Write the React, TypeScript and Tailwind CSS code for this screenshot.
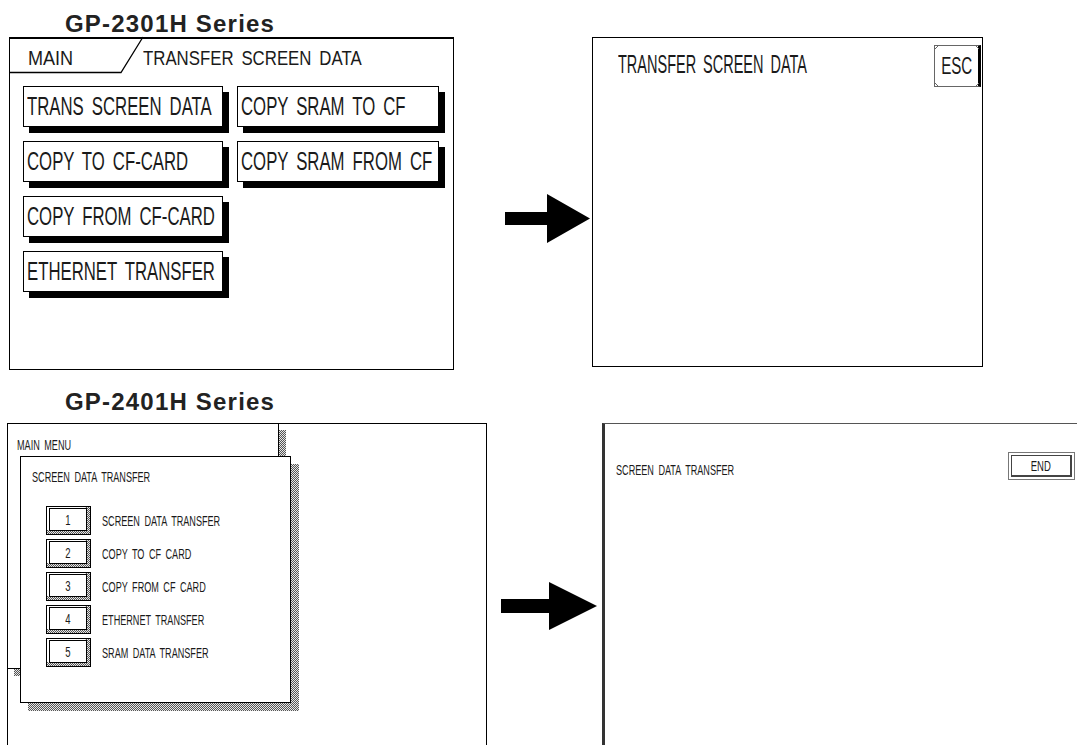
const lcd = "font-['Liberation_Sans',Arial,sans-serif] text-[#1a1a1a]";
const dither = "bg-[repeating-conic-gradient(#555_0_25%,#e5e5e5_0_50%)] bg-[length:2px_2px]";

function Arrow({ w, h, points }: { w: number; h: number; points: string }) {
  return (
    <svg width={w} height={h} viewBox={`0 0 ${w} ${h}`} className="block">
      <polygon points={points} fill="#000" />
    </svg>
  );
}

function BigButton({ label }: { label: string }) {
  return (
    <div className="h-[41px] border border-black bg-white shadow-[6px_6px_0_0_#000] flex items-center pl-[3px]">
      <span className="inline-block origin-left scale-x-[0.67] [word-spacing:5px] whitespace-nowrap text-[25px] leading-none">
        {label}
      </span>
    </div>
  );
}

function NumButton({ n, label }: { n: string; label: string }) {
  return (
    <div className="flex items-center gap-[11px]">
      <div className={`w-[45px] h-[29px] border border-black flex ${dither}`}>
        <div className="ml-[2px] mt-[1px] mr-[3px] mb-[3px] flex-1 border border-black bg-white shadow-[-2px_-1px_0_0_#fff] flex items-center justify-center">
          <span className="inline-block scale-x-[0.68] text-[14px] leading-none">{n}</span>
        </div>
      </div>
      <span className="inline-block origin-left scale-x-[0.65] [word-spacing:3px] whitespace-nowrap text-[14px] leading-none">
        {label}
      </span>
    </div>
  );
}

const bigButtons = [
  "TRANS SCREEN DATA",
  "COPY SRAM TO CF",
  "COPY TO CF-CARD",
  "COPY SRAM FROM CF",
  "COPY FROM CF-CARD",
  "",
  "ETHERNET TRANSFER",
];

const menuRows = [
  ["1", "SCREEN DATA TRANSFER"],
  ["2", "COPY TO CF CARD"],
  ["3", "COPY FROM CF CARD"],
  ["4", "ETHERNET TRANSFER"],
  ["5", "SRAM DATA TRANSFER"],
];

export default function App() {
  const title = "font-['Liberation_Sans',Arial,sans-serif] font-bold text-[24px] leading-none tracking-[1.2px] text-[#222]";

  return (
    <div className={`w-[1077px] h-[745px] overflow-hidden bg-white ${lcd}`}>
      {/* GP-2301H */}
      <div className="flex items-start h-[375px]">
        <div className="flex flex-col pl-[9px] w-[454px] shrink-0">
          <div className="h-[37px] pt-[12px] pl-[56px]">
            <span className={title}>GP-2301H Series</span>
          </div>
          <div className="w-[445px] h-[333px] border border-black border-t-2 bg-white">
            <div className="relative h-[34px]">
              <svg width="140" height="36" viewBox="0 0 140 36" className="absolute left-0 top-0 overflow-visible">
                <polyline points="-1,33.5 111,33.5 133,-2" fill="none" stroke="#000" strokeWidth="1.3" />
              </svg>
              <div className="flex pt-[8px] text-[21px] leading-none">
                <span className="ml-[18px] w-[115px] shrink-0">
                  <span className="inline-block origin-left scale-x-[0.86]">MAIN</span>
                </span>
                <span className="inline-block origin-left scale-x-[0.8] [word-spacing:4px] whitespace-nowrap">
                  TRANSFER SCREEN DATA
                </span>
              </div>
            </div>
            <div className="grid grid-cols-[200px_202px] gap-x-[14px] gap-y-[14px] mt-[13px] pl-[13px]">
              {bigButtons.map((b, i) => (b ? <BigButton key={i} label={b} /> : <div key={i} />))}
            </div>
          </div>
        </div>

        <div className="ml-[51px] mt-[194px] shrink-0">
          <Arrow w={85} h={49} points="0,18 42,18 42,0 85,24.5 42,49 42,31 0,31" />
        </div>

        <div className="ml-[2px] mt-[37px] w-[391px] h-[330px] border border-black shrink-0 flex items-start justify-between">
          <span className="ml-[25px] mt-[14px] w-[280px] shrink-0 inline-block origin-left scale-x-[0.58] [word-spacing:5px] whitespace-nowrap text-[25px] leading-none">
            TRANSFER SCREEN DATA
          </span>
          <div className="relative mt-[7px] mr-[1px] w-[47px] h-[42px] shrink-0 border border-[#666] border-r-[3px] border-r-black flex items-center justify-center">
            <svg width="44" height="40" viewBox="0 0 44 40" className="absolute left-0 top-0">
              <path d="M0 3 L3 0 M0 37 L3 40 M41 0 L44 3 M41 40 L44 37" stroke="#666" strokeWidth="1" fill="none" />
            </svg>
            <span className="inline-block scale-x-[0.63] text-[24px] leading-none">ESC</span>
          </div>
        </div>
      </div>

      {/* GP-2401H */}
      <div className="h-[48px] pt-[15px] pl-[65px]">
        <span className={title}>GP-2401H Series</span>
      </div>
      <div className="flex items-start">
        <div className="ml-[7px] w-[480px] h-[330px] border border-black relative shrink-0">
          <div className="absolute left-[-1px] top-[-1px] w-[279px] h-[253px]">
            <div className={`absolute left-[7px] top-[7px] w-[272px] h-[246px] ${dither}`} />
            <div className="absolute left-0 top-0 w-[272px] h-[246px] border border-black bg-white pl-[9px] pt-[9px]">
              <span className="inline-block origin-left scale-x-[0.65] [word-spacing:3px] whitespace-nowrap text-[14px] leading-none">
                MAIN MENU
              </span>
            </div>
          </div>
          <div className="absolute left-[12px] top-[32px] w-[279px] h-[255px]">
            <div className={`absolute left-[8px] top-[8px] w-[271px] h-[247px] ${dither}`} />
            <div className="absolute left-0 top-0 w-[271px] h-[247px] border border-black bg-white pl-[11px] pt-[8px]">
              <span className="inline-block origin-left scale-x-[0.65] [word-spacing:3px] whitespace-nowrap text-[14px] leading-none">
                SCREEN DATA TRANSFER
              </span>
              <div className="flex flex-col gap-[4px] mt-[17px] pl-[14px]">
                {menuRows.map(([n, l]) => (
                  <NumButton key={n} n={n} label={l} />
                ))}
              </div>
            </div>
          </div>
        </div>

        <div className="ml-[14px] mt-[159px] shrink-0">
          <Arrow w={96} h={48} points="0,17 48,17 48,0 96,24 48,48 48,31 0,31" />
        </div>

        <div className="ml-[5px] w-[490px] h-[330px] border border-[#555] border-l-[3px] border-l-[#333] shrink-0 flex items-start">
          <span className="ml-[11px] w-[392px] mt-[39px] shrink-0 inline-block origin-left scale-x-[0.65] [word-spacing:3px] whitespace-nowrap text-[14px] leading-none">
            SCREEN DATA TRANSFER
          </span>
          <div className="mt-[28px] w-[67px] h-[28px] border border-[#777] p-[2px] shrink-0">
            <div className="h-full border border-[#444] border-r-2 border-b-2 flex items-center justify-center">
              <span className="inline-block scale-x-[0.68] text-[14px] leading-none">END</span>
            </div>
          </div>
        </div>
      </div>
    </div>
  );
}
